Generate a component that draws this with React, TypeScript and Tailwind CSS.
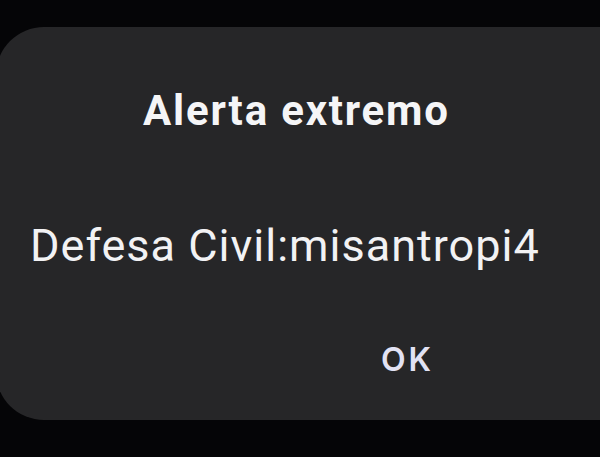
export default function App() {
  return (
    <div className="h-[457px] w-[600px] overflow-hidden bg-[#050507] pt-[27px]" style={{ fontFamily: "Roboto, 'Noto Sans', sans-serif" }}>
      <div className="ml-[-4px] flex h-[393px] w-[640px] flex-col rounded-l-[48px] bg-[#262628]">
        <div className="ml-[147px] mt-[63px] text-[42px] font-bold leading-[42px] tracking-[1.8px] text-[#f5f5f7]">Alerta extremo</div>
        <div className="ml-[34px] mt-[91px] text-[45px] leading-[45px] tracking-[1px] text-[#f2f2f4]">Defesa Civil:misantropi4</div>
        <div className="ml-[385px] mt-[76px] font-['Inter',sans-serif] text-[32px] font-semibold leading-[32px] tracking-[3px] text-[#e2e2f4]">OK</div>
      </div>
    </div>
  );
}
